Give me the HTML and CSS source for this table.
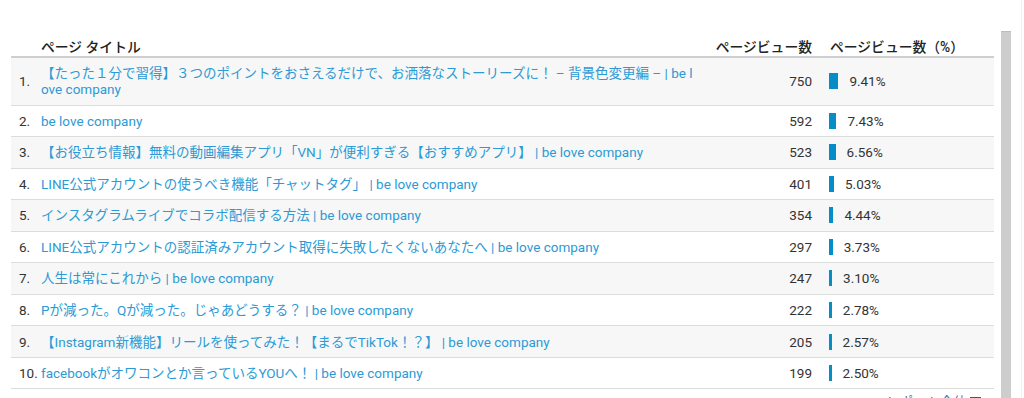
FILE: index.html
```html
<!DOCTYPE html>
<html lang="ja">
<head>
<meta charset="utf-8">
<title>ページ タイトル</title>
<link rel="stylesheet" href="styles.css">
</head>
<body>
<div class="page">
  <div class="main">
    <div class="table">
      <div class="row head">
        <div class="c-num"></div>
        <div class="c-title">ページ タイトル</div>
        <div class="c-pv">ページビュー数</div>
        <div class="c-pct">ページビュー数（%）</div>
      </div>
      <div class="row odd">
        <div class="c-num">1.</div>
        <div class="c-title"><a>【たった１分で習得】３つのポイントをおさえるだけで、お洒落なストーリーズに！ – 背景色変更編 – | be love company</a></div>
        <div class="c-pv">750</div>
        <div class="c-pct"><span class="bar" style="width:9.4px"></span>9.41%</div>
      </div>
      <div class="row">
        <div class="c-num">2.</div>
        <div class="c-title"><a>be love company</a></div>
        <div class="c-pv">592</div>
        <div class="c-pct"><span class="bar" style="width:7.4px"></span>7.43%</div>
      </div>
      <div class="row odd">
        <div class="c-num">3.</div>
        <div class="c-title"><a>【お役立ち情報】無料の動画編集アプリ「VN」が便利すぎる【おすすめアプリ】 | be love company</a></div>
        <div class="c-pv">523</div>
        <div class="c-pct"><span class="bar" style="width:6.6px"></span>6.56%</div>
      </div>
      <div class="row">
        <div class="c-num">4.</div>
        <div class="c-title"><a>LINE公式アカウントの使うべき機能「チャットタグ」 | be love company</a></div>
        <div class="c-pv">401</div>
        <div class="c-pct"><span class="bar" style="width:5.0px"></span>5.03%</div>
      </div>
      <div class="row odd">
        <div class="c-num">5.</div>
        <div class="c-title"><a>インスタグラムライブでコラボ配信する方法 | be love company</a></div>
        <div class="c-pv">354</div>
        <div class="c-pct"><span class="bar" style="width:4.4px"></span>4.44%</div>
      </div>
      <div class="row">
        <div class="c-num">6.</div>
        <div class="c-title"><a>LINE公式アカウントの認証済みアカウント取得に失敗したくないあなたへ | be love company</a></div>
        <div class="c-pv">297</div>
        <div class="c-pct"><span class="bar" style="width:3.7px"></span>3.73%</div>
      </div>
      <div class="row odd">
        <div class="c-num">7.</div>
        <div class="c-title"><a>人生は常にこれから | be love company</a></div>
        <div class="c-pv">247</div>
        <div class="c-pct"><span class="bar" style="width:3.1px"></span>3.10%</div>
      </div>
      <div class="row">
        <div class="c-num">8.</div>
        <div class="c-title"><a>Pが減った。Qが減った。じゃあどうする？ | be love company</a></div>
        <div class="c-pv">222</div>
        <div class="c-pct"><span class="bar" style="width:2.8px"></span>2.78%</div>
      </div>
      <div class="row odd">
        <div class="c-num">9.</div>
        <div class="c-title"><a>【Instagram新機能】リールを使ってみた！【まるでTikTok！？】 | be love company</a></div>
        <div class="c-pv">205</div>
        <div class="c-pct"><span class="bar" style="width:2.6px"></span>2.57%</div>
      </div>
      <div class="row">
        <div class="c-num">10.</div>
        <div class="c-title"><a>facebookがオワコンとか言っているYOUへ！ | be love company</a></div>
        <div class="c-pv">199</div>
        <div class="c-pct"><span class="bar" style="width:2.5px"></span>2.50%</div>
      </div>
    </div>
    <div class="footer"><a>レポート全体</a><span class="ico"></span></div>
  </div>
  <div class="scroll"></div>
  <div class="edge"></div>
</div>
</body>
</html>
```

FILE: styles.css
```css
html, body {
  margin: 0;
  padding: 0;
  background: #fff;
  height: 398px;
  overflow: hidden;
}
body {
  font-family: Roboto, "Noto Sans CJK JP", sans-serif;
  font-size: 13.5px;
  color: #333;
}
.page {
  display: flex;
  height: 398px;
}
.main {
  width: 983px;
  padding-left: 11px;
  padding-top: 35px;
  flex: none;
}
.table {
  display: flex;
  flex-direction: column;
}
.row {
  display: grid;
  grid-template-columns: 30px 654px 117px 182px;
  line-height: 16px;
  padding: 7.28px 0;
  border-bottom: 1px solid #dcdcdc;
}
.row.odd {
  background: #f7f7f7;
}
.row.head {
  padding: 4px 0 1px;
  border-bottom: 2px solid #cfcfcf;
  color: #222;
  font-weight: 500;
  font-size: 13.8px;
}
.c-num {
  padding-left: 8px;
  display: flex;
  align-items: center;
  white-space: nowrap;
}
.c-title {
  word-break: break-all;
}
.c-title a {
  color: #2b9ad5;
  text-decoration: none;
}
.c-pv {
  text-align: right;
  display: flex;
  align-items: center;
  justify-content: flex-end;
  white-space: nowrap;
}
.c-pct {
  padding-left: 17px;
  display: flex;
  align-items: center;
  white-space: nowrap;
}
.head .c-pct {
  padding-left: 18px;
}
.bar {
  display: inline-block;
  height: 16px;
  background: #058dc7;
  margin-right: 11px;
}
.footer {
  display: flex;
  justify-content: flex-end;
  align-items: center;
  gap: 3px;
  padding-right: 13px;
  margin-top: 5px;
  line-height: 16px;
}
.footer a {
  color: #2b7fc5;
}
.footer .ico {
  width: 11px;
  height: 11px;
  background: #1f5f9f;
}
.scroll {
  width: 10px;
  margin-left: 7px;
  margin-top: 31px;
  background: #cdcdcd;
  border-top: 1px solid #bdbdbd;
  flex: none;
}
.edge {
  width: 1px;
  margin-left: 10px;
  background: #f0f0f0;
  flex: none;
}
```
